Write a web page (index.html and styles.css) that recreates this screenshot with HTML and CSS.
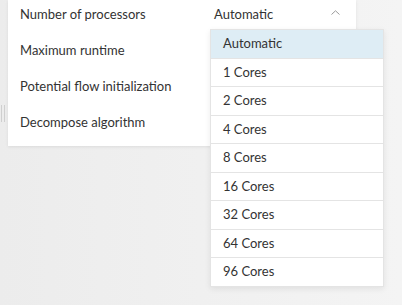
FILE: index.html
```html
<!DOCTYPE html>
<html lang="en">
<head>
    <meta charset="UTF-8">
    <meta name="viewport" content="width=device-width, initial-scale=1.0">
    <title>Solver Settings</title>
    <link rel="stylesheet" href="styles.css">
</head>
<body>
    <div class="resize-handle"></div>
    <div class="settings-panel">
        <div class="setting-row">
            <div class="setting-label">Number of processors</div>
            <div class="setting-value select-open">
                <span>Automatic</span>
                <svg class="caret" width="9" height="5" viewBox="0 0 9 5">
                    <path d="M0.5 4.5 L4.5 0.8 L8.5 4.5" fill="none" stroke="#9a9a9a" stroke-width="1"/>
                </svg>
                <ul class="dropdown">
                    <li class="selected">Automatic</li>
                    <li>1 Cores</li>
                    <li>2 Cores</li>
                    <li>4 Cores</li>
                    <li>8 Cores</li>
                    <li>16 Cores</li>
                    <li>32 Cores</li>
                    <li>64 Cores</li>
                    <li>96 Cores</li>
                </ul>
            </div>
        </div>
        <div class="setting-row">
            <div class="setting-label">Maximum runtime</div>
            <div class="setting-value"></div>
        </div>
        <div class="setting-row">
            <div class="setting-label">Potential flow initialization</div>
            <div class="setting-value"></div>
        </div>
        <div class="setting-row">
            <div class="setting-label">Decompose algorithm</div>
            <div class="setting-value"></div>
        </div>
    </div>
</body>
</html>
```

FILE: styles.css
```css
body {
    font-family: Lato, "Open Sans", sans-serif;
    font-size: 13px;
    color: #333;
    margin: 0;
    padding: 0;
    background: linear-gradient(to right, #ececec, #f4f4f4);
    height: 305px;
    position: relative;
}
.resize-handle {
    position: absolute;
    left: 1px;
    top: 105px;
    width: 2px;
    height: 17px;
    border-left: 1px solid #cfcfcf;
    border-right: 1px solid #cfcfcf;
}
.settings-panel {
    margin-left: 8px;
    width: 348px;
    background-color: #fff;
    padding: 0 0 8px 0;
    display: flex;
    flex-direction: column;
    gap: 6px;
    box-shadow: 0 1px 3px rgba(0,0,0,0.08);
}
.setting-row {
    display: flex;
    align-items: center;
    height: 30px;
    margin-top: -1px;
    margin-bottom: 1px;
}
.setting-label {
    width: 202px;
    padding-left: 12px;
    box-sizing: border-box;
}
.setting-value {
    position: relative;
    flex: 1;
    display: flex;
    align-items: center;
    justify-content: space-between;
    padding: 0 16px 0 4px;
    height: 100%;
}
.caret {
    margin-top: -3px;
}
.dropdown {
    position: absolute;
    top: 30px;
    left: 0;
    width: 172px;
    margin: 0;
    padding: 0;
    list-style: none;
    background-color: #fff;
    border: 1px solid #e4e4e4;
    box-shadow: 0 2px 6px rgba(0,0,0,0.08);
    z-index: 10;
}
.dropdown li {
    height: 27.5px;
    line-height: 27.5px;
    padding-left: 12px;
    border-bottom: 1px solid #e4e4e4;
}
.dropdown li:last-child {
    border-bottom: none;
}
.dropdown li.selected {
    background-color: #deedf5;
}
```
